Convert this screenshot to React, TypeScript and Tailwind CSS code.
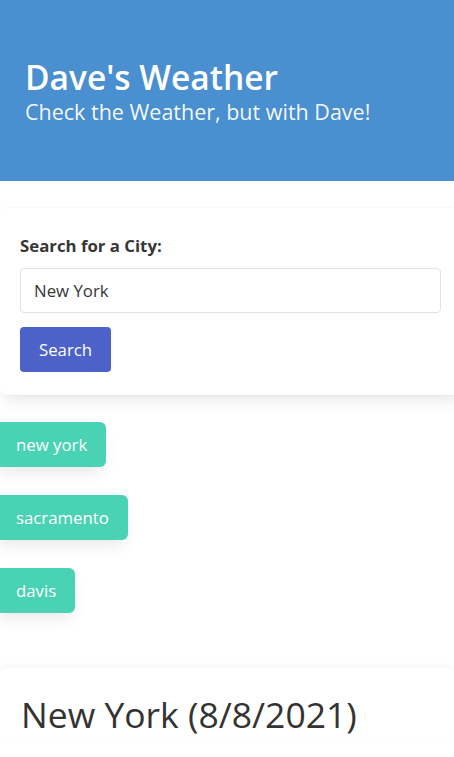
const history = ["new york", "sacramento", "davis"];

export default function App() {
  return (
    <div className="min-h-screen overflow-x-hidden bg-white font-['Open_Sans',sans-serif] text-[#363636]">
      {/* hero */}
      <header className="flex h-[181px] flex-col justify-center bg-[#4a8fd0] px-[25px] text-white">
        <h1 className="text-[33.5px] font-semibold leading-[42px]">Dave's Weather</h1>
        <p className="text-[21.5px] leading-[28px] text-white/95">Check the Weather, but with Dave!</p>
      </header>

      {/* search box */}
      <section className="mt-[27px] mr-[-12px] rounded-md bg-white px-[20px] pt-[26px] pb-[23px] shadow-[0_8px_16px_-4px_rgba(10,10,10,0.1),0_0_0_1px_rgba(10,10,10,0.02)]">
        <label className="block text-[16.8px] font-bold leading-[24px] text-[#363636]">Search for a City:</label>
        <input
          defaultValue="New York"
          className="mt-[10px] block h-[45px] w-[421px] rounded-[4px] border border-[#e3e3e3] px-[13px] text-[16.8px] text-[#363636] outline-none"
        />
        <button className="mt-[14px] h-[45px] rounded-[4px] bg-[#4c62c8] px-[19px] text-[16.8px] text-white">
          Search
        </button>
      </section>

      {/* recent searches */}
      <div className="mt-[27px] flex flex-col items-start gap-[28px]">
        {history.map((city) => (
          <button
            key={city}
            className="-ml-[6px] h-[45px] rounded-md bg-[#4ad2b4] pl-[22px] pr-[19px] text-[16.8px] text-white shadow-[0_8px_16px_-4px_rgba(10,10,10,0.1)]"
          >
            {city}
          </button>
        ))}
      </div>

      {/* forecast */}
      <section className="mt-[55px] rounded-md bg-white px-[21px] pt-[22px] shadow-[0_-2px_6px_rgba(10,10,10,0.04)]">
        <h2 className="text-[35.5px] leading-[48px] text-[#333]">New York (8/8/2021)</h2>
      </section>
    </div>
  );
}
